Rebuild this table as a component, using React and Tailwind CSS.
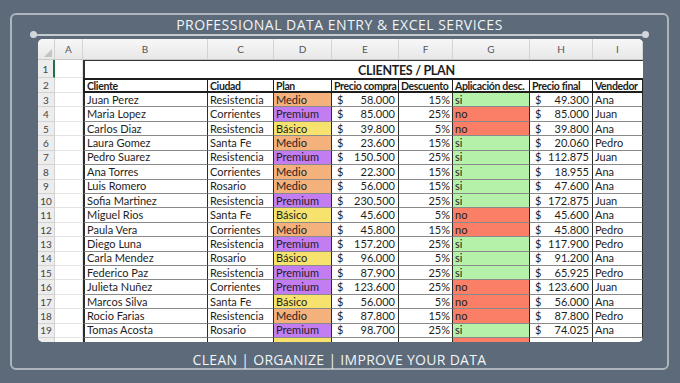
import React from "react";

const rows = [
  ["Juan Perez", "Resistencia", "Medio", "58.000", "15%", "si", "49.300", "Ana"],
  ["Maria Lopez", "Corrientes", "Premium", "85.000", "25%", "no", "85.000", "Juan"],
  ["Carlos Diaz", "Resistencia", "Básico", "39.800", "5%", "no", "39.800", "Ana"],
  ["Laura Gomez", "Santa Fe", "Medio", "23.600", "15%", "si", "20.060", "Pedro"],
  ["Pedro Suarez", "Resistencia", "Premium", "150.500", "25%", "si", "112.875", "Juan"],
  ["Ana Torres", "Corrientes", "Medio", "22.300", "15%", "si", "18.955", "Ana"],
  ["Luis Romero", "Rosario", "Medio", "56.000", "15%", "si", "47.600", "Ana"],
  ["Sofia Martinez", "Resistencia", "Premium", "230.500", "25%", "si", "172.875", "Juan"],
  ["Miguel Rios", "Santa Fe", "Básico", "45.600", "5%", "no", "45.600", "Ana"],
  ["Paula Vera", "Corrientes", "Medio", "45.800", "15%", "no", "45.800", "Pedro"],
  ["Diego Luna", "Resistencia", "Premium", "157.200", "25%", "si", "117.900", "Pedro"],
  ["Carla Mendez", "Rosario", "Básico", "96.000", "5%", "si", "91.200", "Ana"],
  ["Federico Paz", "Resistencia", "Premium", "87.900", "25%", "si", "65.925", "Pedro"],
  ["Julieta Nuñez", "Corrientes", "Premium", "123.600", "25%", "no", "123.600", "Juan"],
  ["Marcos Silva", "Santa Fe", "Básico", "56.000", "5%", "no", "56.000", "Ana"],
  ["Rocio Farias", "Resistencia", "Medio", "87.800", "15%", "no", "87.800", "Pedro"],
  ["Tomas Acosta", "Rosario", "Premium", "98.700", "25%", "si", "74.025", "Ana"],
  ["", "", "Básico", "", "", "no", "", ""],
];

const planBg = {
  Medio: "bg-[#f5b17c]",
  Premium: "bg-[#c47cf2]",
  "Básico": "bg-[#f6e26c]",
};

const applyBg = {
  si: "bg-[#b5f1a9]",
  no: "bg-[#fb7e66]",
};

const cols = ["A", "B", "C", "D", "E", "F", "G", "H", "I"];
const colW = ["w-[28px]", "w-[125px]", "w-[66px]", "w-[58px]", "w-[67px]", "w-[54px]", "w-[77px]", "w-[63px]", "w-[50px]"];

function RowNum({ n, active }) {
  return (
    <div
      className={`w-[17px] shrink-0 h-full flex items-center justify-center bg-[#ededed] border-b border-r border-[#d2d2d2] text-[10px] text-[#444] ${active ? "border-r-2 border-r-[#217346]" : ""}`}
    >
      {n}
    </div>
  );
}

function ColA() {
  return <div className="w-[28px] shrink-0 h-full bg-white border-b border-r border-[#e4e4e4]" />;
}

function Money({ v, w }) {
  return (
    <div className={`${w} shrink-0 h-full flex items-center justify-between pl-[5px] pr-[3px] border-r border-b border-r-[#2b2b2b] border-b-[#8a8a8a] bg-white`}>
      {v ? <span>$</span> : <span />}
      <span>{v}</span>
    </div>
  );
}

function Cell({ children, w, bg, right, extra }) {
  return (
    <div
      className={`${w} shrink-0 h-full flex items-center px-[2px] overflow-hidden whitespace-nowrap border-r border-b border-r-[#2b2b2b] border-b-[#8a8a8a] ${right ? "justify-end pr-[2px]" : ""} ${bg || "bg-white"} ${extra || ""}`}
    >
      {children}
    </div>
  );
}

export default function App() {
  return (
    <div
      className="w-[680px] h-[383px] overflow-hidden bg-[#5c6a7a] pt-[13px] pl-[10px]"
      style={{ fontFamily: "'Open Sans', 'Noto Sans', sans-serif" }}
    >
      <div className="w-[659px] h-[357px] border-2 border-[#adb4bc] rounded-[6px] flex flex-col">
        <div className="h-[16px] leading-[16px] text-center text-[14px] text-[#f2f4f6] tracking-[0.5px] mt-[2px]">
          PROFESSIONAL DATA ENTRY &amp; EXCEL SERVICES
        </div>
        <div className="flex items-center px-[18px] h-[7px] mt-[-2px]">
          <div className="w-[7px] h-[7px] rounded-full bg-[#d3d7dc] shrink-0" />
          <div className="flex-1 h-[2px] bg-[#c6cbd1]" />
          <div className="w-[7px] h-[7px] rounded-full bg-[#d3d7dc] shrink-0" />
        </div>
        <div
          className="ml-[26px] mt-[1px] w-[605px] h-[303px] bg-white rounded-[5px] overflow-hidden text-[11px] text-[#1e1e1e] leading-[14px]"
          style={{ fontFamily: "Lato, 'Open Sans', sans-serif" }}
        >
          {/* column header */}
          <div className="flex h-[21px] bg-gradient-to-b from-[#f7f7f7] to-[#e8e8e8] border-b border-[#c8c8c8]">
            <div className="w-[17px] shrink-0 h-full border-r border-[#d0d0d0] relative">
              <svg className="absolute right-[2px] bottom-[2px]" width="8" height="8" viewBox="0 0 8 8">
                <polygon points="8,0 8,8 0,8" fill="#c4c4c4" />
              </svg>
            </div>
            {cols.map((c, i) => (
              <div
                key={c}
                className={`${colW[i]} shrink-0 h-full flex items-center justify-center text-[10px] text-[#555] border-r border-[#d4d4d4]`}
              >
                {c}
              </div>
            ))}
          </div>
          {/* row 1 */}
          <div className="flex h-[18.3px]">
            <RowNum n={1} active />
            <ColA />
            <div className="w-[560px] shrink-0 h-full border-l-2 border-t border-[#333] bg-white flex items-center pl-[273px] pt-[2px] font-bold text-[12.5px] tracking-[-0.3px]">
              CLIENTES / PLAN
            </div>
          </div>
          {/* row 2 */}
          <div className="flex h-[14.7px]">
            <RowNum n={2} />
            <ColA />
            {["Cliente", "Ciudad", "Plan", "Precio compra", "Descuento", "Aplicación desc.", "Precio final", "Vendedor"].map((t, i) => (
              <div
                key={t}
                className={`${colW[i + 1]} shrink-0 h-full flex items-center pl-[2px] whitespace-nowrap overflow-hidden font-bold text-[10.5px] tracking-[-0.35px] bg-white border-t-2 border-b-2 border-r border-[#1e1e1e] ${i === 0 ? "border-l-2" : ""}`}
              >
                {t}
              </div>
            ))}
          </div>
          {rows.map((r, idx) => (
            <div key={idx} className="flex h-[14.43px]">
              <RowNum n={idx === 17 ? "" : idx + 3} />
              <ColA />
              <Cell w={colW[1]} extra="border-l-2 border-l-[#2b2b2b]">{r[0]}</Cell>
              <Cell w={colW[2]}>{r[1]}</Cell>
              <Cell w={colW[3]} bg={planBg[r[2]]}>{idx === 17 ? "" : r[2]}</Cell>
              <Money w={colW[4]} v={r[3]} />
              <Cell w={colW[5]} right>{r[4]}</Cell>
              <Cell w={colW[6]} bg={applyBg[r[5]]}>{idx === 17 ? "" : r[5]}</Cell>
              <Money w={colW[7]} v={r[6]} />
              <Cell w={colW[8]}>{r[7]}</Cell>
            </div>
          ))}
        </div>
        <div className="mt-[10px] h-[16px] leading-[16px] text-center text-[14px] text-[#f2f4f6] tracking-[0.3px]">
          CLEAN | ORGANIZE | IMPROVE YOUR DATA
        </div>
      </div>
    </div>
  );
}
